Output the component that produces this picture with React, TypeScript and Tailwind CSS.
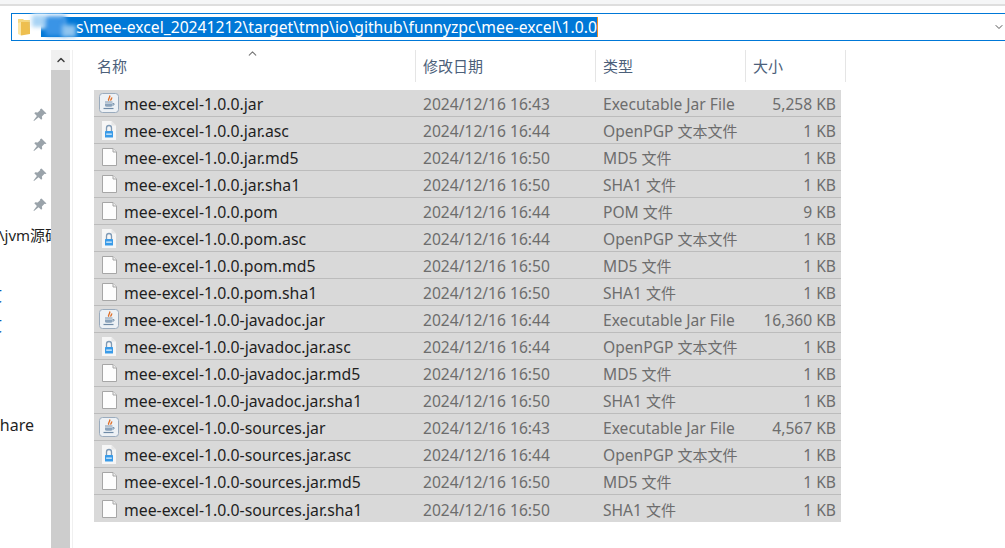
import { ChevronUp, ChevronDown } from 'lucide-react';

const font = 'font-["Noto_Sans","Noto_Sans_CJK_SC",sans-serif]';

type Row = { name: string; date: string; type: string; cjk?: string; size: string; icon: 'java' | 'lock' | 'doc' };

const d43 = '2024/12/16 16:43';
const d44 = '2024/12/16 16:44';
const d50 = '2024/12/16 16:50';

const rows: Row[] = [
  { name: 'mee-excel-1.0.0.jar', date: d43, type: 'Executable Jar File', size: '5,258 KB', icon: 'java' },
  { name: 'mee-excel-1.0.0.jar.asc', date: d44, type: 'OpenPGP ', cjk: '文本文件', size: '1 KB', icon: 'lock' },
  { name: 'mee-excel-1.0.0.jar.md5', date: d50, type: 'MD5 ', cjk: '文件', size: '1 KB', icon: 'doc' },
  { name: 'mee-excel-1.0.0.jar.sha1', date: d50, type: 'SHA1 ', cjk: '文件', size: '1 KB', icon: 'doc' },
  { name: 'mee-excel-1.0.0.pom', date: d44, type: 'POM ', cjk: '文件', size: '9 KB', icon: 'doc' },
  { name: 'mee-excel-1.0.0.pom.asc', date: d44, type: 'OpenPGP ', cjk: '文本文件', size: '1 KB', icon: 'lock' },
  { name: 'mee-excel-1.0.0.pom.md5', date: d50, type: 'MD5 ', cjk: '文件', size: '1 KB', icon: 'doc' },
  { name: 'mee-excel-1.0.0.pom.sha1', date: d50, type: 'SHA1 ', cjk: '文件', size: '1 KB', icon: 'doc' },
  { name: 'mee-excel-1.0.0-javadoc.jar', date: d44, type: 'Executable Jar File', size: '16,360 KB', icon: 'java' },
  { name: 'mee-excel-1.0.0-javadoc.jar.asc', date: d44, type: 'OpenPGP ', cjk: '文本文件', size: '1 KB', icon: 'lock' },
  { name: 'mee-excel-1.0.0-javadoc.jar.md5', date: d50, type: 'MD5 ', cjk: '文件', size: '1 KB', icon: 'doc' },
  { name: 'mee-excel-1.0.0-javadoc.jar.sha1', date: d50, type: 'SHA1 ', cjk: '文件', size: '1 KB', icon: 'doc' },
  { name: 'mee-excel-1.0.0-sources.jar', date: d43, type: 'Executable Jar File', size: '4,567 KB', icon: 'java' },
  { name: 'mee-excel-1.0.0-sources.jar.asc', date: d44, type: 'OpenPGP ', cjk: '文本文件', size: '1 KB', icon: 'lock' },
  { name: 'mee-excel-1.0.0-sources.jar.md5', date: d50, type: 'MD5 ', cjk: '文件', size: '1 KB', icon: 'doc' },
  { name: 'mee-excel-1.0.0-sources.jar.sha1', date: d50, type: 'SHA1 ', cjk: '文件', size: '1 KB', icon: 'doc' },
];

function JavaIcon() {
  return (
    <svg width="20" height="20" viewBox="0 0 20 20" className="shrink-0">
      <rect x="0.5" y="0.5" width="19" height="19" rx="3" fill="#edf1f5" stroke="#9aabbd" />
      <path d="M10.5 2.5c1.5 1.800-2 2.800-.8 5.200M12.500 4.500c1 1.200-1.400 1.800-.5 3.200" fill="none" stroke="#e0702a" strokeWidth="1.400" />
      <path d="M6 9h7.500" stroke="#7a94ae" />
      <path d="M6 10.500h7.500v2c0 .8-.8 1.200-1.500 1.200H7.500c-.8 0-1.500-.4-1.500-1.200z" fill="#8ba3bb" />
      <path d="M13.500 10.500h1.500v1.500h-1.500" fill="none" stroke="#7a94ae" />
      <path d="M4.500 15.500h10" stroke="#6f8aa6" strokeWidth="1.200" />
    </svg>
  );
}

function LockIcon() {
  return (
    <svg width="14" height="19" viewBox="0 0 14 19" className="shrink-0">
      <path d="M0 0h9.500l4.500 4.500V19H0z" fill="#f6f6f6" />
      <path d="M9.500 0v4.500H14z" fill="#e6e6e6" />
      <path d="M4.500 10V7a2.500 2.500 0 0 1 5 0v3" fill="none" stroke="#7f9ab5" strokeWidth="1.300" />
      <rect x="3" y="10" width="8" height="6.500" rx="0.500" fill="#3a9be8" />
      <rect x="4.200" y="12.500" width="5.600" height="1.300" fill="#d9eefc" />
    </svg>
  );
}

function DocIcon() {
  return (
    <svg width="15" height="18" viewBox="0 0 15 18" className="shrink-0">
      <path d="M.5.500h10.500l3.500 3.500v13.500H.5z" fill="#fdfdfd" stroke="#a6a6a6" />
      <path d="M11 .5v3.500h3.500" fill="#efefef" stroke="#a6a6a6" />
    </svg>
  );
}

function FileIcon({ icon }: { icon: Row['icon'] }) {
  if (icon === 'java') return <JavaIcon />;
  if (icon === 'lock') return <LockIcon />;
  return <DocIcon />;
}

function PinIcon() {
  return (
    <svg width="14" height="14" viewBox="0 0 14 14">
      <path d="M8.500.5l5 5-1.200.6-.8-.3-2.600 2.600.3 2.400-1 1-2.600-2.600L1 13l-.5-.5 3.400-4.600L1.300 5.300l1-1 2.400.3 2.600-2.600-.3-.8z" fill="#9aa3aa" />
    </svg>
  );
}

function FolderIcon() {
  return (
    <svg width="13" height="18" viewBox="0 0 13 18" className="shrink-0">
      <path d="M0 1h5l1 1h6v14H0z" fill="#f5d77f" />
      <path d="M3 4h9v12l-9 1.500z" fill="#eebf4f" />
      <path d="M3 4l-3 1v11l3 1.500z" fill="#fbe6a6" />
    </svg>
  );
}

function PinRow() {
  return (
    <div className="h-[30px] flex items-center justify-end pr-[4px]">
      <PinIcon />
    </div>
  );
}

export default function App() {
  return (
    <div className={`w-[1005px] h-[548px] bg-white overflow-hidden flex flex-col ${font}`}>
      {/* Ribbon edge */}
      <div className="h-[6px] shrink-0 bg-[#f5f6f7] border-b-2 border-[#dedede]" />

      {/* Address bar */}
      <div className="relative mt-[7px] ml-[11px] h-[28px] shrink-0 border border-[#0078d7] border-r-0 flex items-center pl-[6px] pr-[3px]">
        <FolderIcon />
        <div className="ml-[10px] flex-1 flex items-center text-[15.7px] leading-[20px] whitespace-nowrap">
          <span className="h-[20px] w-[18px] bg-[#0078d7]" />
          <span className="h-[20px] bg-[#0078d7] text-white pl-[17px] border-r border-[#f28a20]">s\mee-excel_20241212\target\tmp\io\github\funnyzpc\mee-excel\1.0.0</span>
        </div>
        <ChevronDown size={12} className="text-[#555] -mr-[3px]" />
        {/* Blurred-out part of the path */}
        <div className="absolute left-[21px] top-0 h-[14px] w-[30px] bg-white blur-[2px]" />
        <div className="absolute left-[20px] top-[1px] h-[12px] w-[14px] bg-[#a8d4f5] blur-[2px]" />
        <div className="absolute left-[33px] top-[2px] h-[20px] w-[22px] rounded-[4px] bg-[#3a94e6] blur-[2px]" />
        <div className="absolute left-[50px] top-[11px] h-[12px] w-[14px] bg-[#8fc4ef] blur-[2px]" />
      </div>

      <div className="flex flex-1 min-h-0 mt-[9px]">
        {/* Navigation pane, cut off by the scrollbar */}
        <div className="w-[51px] shrink-0 overflow-hidden pt-[50px] text-[16px] whitespace-nowrap">
          <PinRow />
          <PinRow />
          <PinRow />
          <PinRow />
          <div className="h-[30px] flex items-center -ml-[1px] text-[15px] text-[#1f1f1f]">\jvm源码</div>
          <div className="h-[30px]" />
          <div className="h-[30px] flex items-center text-[#0a5bb5] -ml-[14px]">文</div>
          <div className="h-[30px] flex items-center text-[#0a5bb5] -ml-[14px]">文</div>
          <div className="h-[70px]" />
          <div className="h-[30px] flex items-center -ml-[9px] text-[#1f1f1f]">Share</div>
        </div>

        {/* Nav scrollbar */}
        <div className="w-[19px] shrink-0 flex flex-col">
          <div className="h-[20px] bg-[#f0f0f0] flex items-center justify-center">
            <ChevronUp size={12} strokeWidth={3} className="text-[#404040]" />
          </div>
          <div className="flex-1 bg-[#cdcdcd]" />
        </div>
        <div className="w-[3px] shrink-0 border-r border-[#f0f0f0]" />

        {/* File list */}
        <div className="flex-1 min-w-0 pl-[21px]">
          <div className="relative flex h-[32px] text-[15px] text-[#4c607a]">
            <ChevronUp size={13} className="absolute left-[152px] -top-[3px] text-[#777]" />
            <div className="w-[322px] pl-[3px] flex items-center border-r border-[#e5e5e5]">名称</div>
            <div className="w-[180px] pl-[7px] flex items-center border-r border-[#e5e5e5]">修改日期</div>
            <div className="w-[150px] pl-[7px] flex items-center border-r border-[#e5e5e5]">类型</div>
            <div className="w-[100px] pl-[7px] flex items-center border-r border-[#e5e5e5]">大小</div>
          </div>

          <div className="mt-[8px] w-[747px] text-[15.6px]">
            {rows.map((row, i) => (
              <div
                key={row.name}
                className={`flex items-center h-[27px] bg-[#d9d9d9] ${i < rows.length - 1 ? 'border-b border-[#bcbcbc]' : ''}`}
              >
                <div className="w-[321px] flex items-center pl-[5px] text-[#1f1f1f] whitespace-nowrap">
                  <div className="w-[20px] flex justify-center mr-[5px]">
                    <FileIcon icon={row.icon} />
                  </div>
                  <span className="pt-[4px] text-[15.8px]">{row.name}</span>
                </div>
                <div className="w-[180px] pt-[4px] pl-[8px] text-[#6d6d6d]">{row.date}</div>
                <div className="w-[150px] pt-[4px] pl-[8px] text-[#6d6d6d] whitespace-pre">
                  {row.type}
                  {row.cjk && <span className="text-[15px]">{row.cjk}</span>}
                </div>
                <div className="flex-1 pt-[4px] pr-[5px] text-right text-[#6d6d6d]">{row.size}</div>
              </div>
            ))}
          </div>
        </div>
      </div>
    </div>
  );
}
